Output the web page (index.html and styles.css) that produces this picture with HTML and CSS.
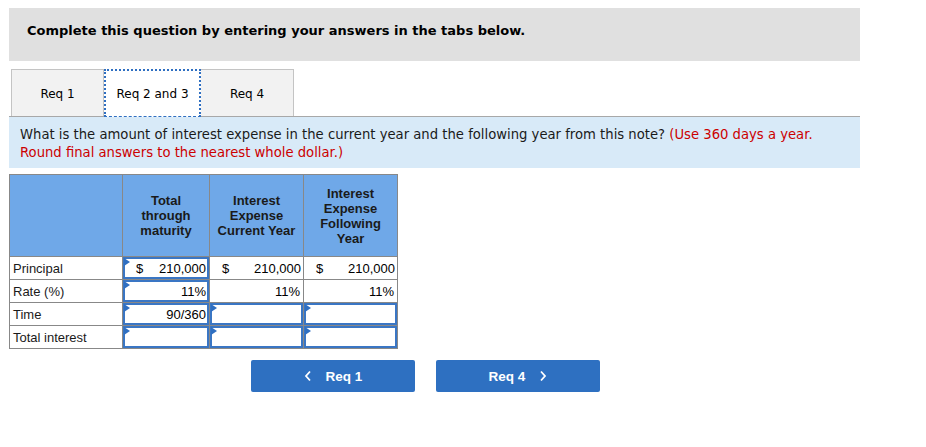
FILE: index.html
```html
<!DOCTYPE html>
<html>
<head>
<meta charset="utf-8">
<link rel="stylesheet" href="styles.css">
</head>
<body>
<div class="page">
  <div class="banner">Complete this question by entering your answers in the tabs below.</div>
  <div class="tabs">
    <div class="tab">Req 1</div>
    <div class="tab active">Req 2 and 3</div>
    <div class="tab">Req 4</div>
  </div>
  <div class="question">What is the amount of interest expense in the current year and the following year from this note? <span class="red">(Use 360 days a year. Round final answers to the nearest whole dollar.)</span></div>
  <table class="grid">
    <colgroup>
      <col class="c1"><col class="c2"><col class="c3"><col class="c4">
    </colgroup>
    <thead>
      <tr class="head">
        <th></th>
        <th>Total<br>through<br>maturity</th>
        <th>Interest<br>Expense<br>Current Year</th>
        <th>Interest<br>Expense<br>Following<br>Year</th>
      </tr>
    </thead>
    <tbody>
      <tr>
        <td class="label">Principal</td>
        <td class="inp"><div class="box money"><span>$</span><span>210,000</span></div></td>
        <td class="plain"><div class="money"><span>$</span><span>210,000</span></div></td>
        <td class="plain"><div class="money"><span>$</span><span>210,000</span></div></td>
      </tr>
      <tr>
        <td class="label">Rate (%)</td>
        <td class="inp"><div class="box right">11%</div></td>
        <td class="plain"><div class="right">11%</div></td>
        <td class="plain"><div class="right">11%</div></td>
      </tr>
      <tr>
        <td class="label">Time</td>
        <td class="inp"><div class="box right">90/360</div></td>
        <td class="inp"><div class="box right"></div></td>
        <td class="inp"><div class="box right"></div></td>
      </tr>
      <tr>
        <td class="label">Total interest</td>
        <td class="inp"><div class="box right"></div></td>
        <td class="inp"><div class="box right"></div></td>
        <td class="inp"><div class="box right"></div></td>
      </tr>
    </tbody>
  </table>
  <div class="nav">
    <div class="btn"><svg class="chev" width="8" height="12" viewBox="0 0 8 12"><path d="M6 1.5 L2 6 L6 10.5" fill="none" stroke="#fff" stroke-width="1.8"/></svg><span class="prevlabel">Req 1</span></div>
    <div class="btn"><span class="nextlabel">Req 4</span><svg class="chev" width="8" height="12" viewBox="0 0 8 12"><path d="M2 1.5 L6 6 L2 10.5" fill="none" stroke="#fff" stroke-width="1.8"/></svg></div>
  </div>
</div>
</body>
</html>
```

FILE: styles.css
```css
* { box-sizing: border-box; }
body {
  margin: 0;
  background: #fff;
  font-family: "DejaVu Sans", Verdana, sans-serif;
  color: #000;
}
.page {
  padding: 8px 0 0 9px;
  width: 860px;
}
.banner {
  background: #e0e0e0;
  height: 53px;
  padding: 14px 0 0 18px;
  font-weight: bold;
  font-size: 13px;
  line-height: 18px;
}
.tabs {
  display: flex;
  margin-top: 8px;
  padding-left: 2px;
  border-bottom: 1px solid #a8a8a8;
  height: 48px;
}
.tab {
  width: 93px;
  height: 47px;
  background: #f2f2f2;
  border: 1px solid #c4c4c4;
  border-bottom: none;
  font-size: 12px;
  display: flex;
  align-items: center;
  justify-content: center;
  padding-top: 1px;
}
.tab.active {
  width: 97px;
  background: #fff;
  border: 2px dotted #2f6fc1;
  border-bottom: 1px dashed #2f6fc1;
  height: 48px;
  margin-bottom: -1px;
}
.tab:last-child { border-left: none; }
.question {
  background: #d8eaf8;
  height: 51px;
  padding: 9px 40px 0 11px;
  font-size: 13.2px;
  line-height: 18px;
  color: #1a1a1a;
}
.red { color: #cc0000; }
.grid {
  margin-top: 6px;
  border-collapse: collapse;
  font-family: "Liberation Sans", Arial, sans-serif;
  font-size: 13px;
  border: 1px solid #888;
}
.c1 { width: 113px; }
.c2 { width: 87px; }
.c3 { width: 94px; }
.c4 { width: 94px; }
.grid th, .grid td {
  border: 1px solid #888;
  padding: 0;
}
.head th {
  background: #6fa8e8;
  height: 82px;
  font-weight: bold;
  color: #1a1a1a;
  line-height: 15px;
  vertical-align: middle;
  text-align: center;
}
.grid td { height: 23px; }
.label {
  padding: 0 3px !important;
  color: #1a1a1a;
}
.inp { position: relative; }
.box {
  height: 22px;
  border: 2px solid #3a76c4;
  padding: 0 2px 0 4px;
  display: flex;
  align-items: center;
  position: relative;
}
.inp .box::before {
  content: "";
  position: absolute;
  left: -1px;
  top: -1px;
  width: 0;
  height: 0;
  border-top: 4px solid transparent;
  border-bottom: 4px solid transparent;
  border-left: 6px solid #2f6fc1;
}
.right { justify-content: flex-end; text-align: right; padding-right: 1px; }
.plain .right { padding: 0 3px; display: flex; justify-content: flex-end; }
.money {
  display: flex;
  justify-content: space-between;
  align-items: center;
  padding: 0 1px 0 11px;
}
.plain .money { padding: 0 2px 0 12px; }
.inp .money { padding-left: 11px; }
.nav {
  display: flex;
  gap: 21px;
  margin-top: 11px;
  padding-left: 242px;
}
.btn {
  width: 164px;
  height: 32px;
  background: #2e70c1;
  border-radius: 2px;
  color: #fff;
  font-family: "Liberation Sans", Arial, sans-serif;
  font-weight: bold;
  font-size: 13.5px;
  display: flex;
  align-items: center;
  justify-content: center;
  gap: 14px;
}
```
